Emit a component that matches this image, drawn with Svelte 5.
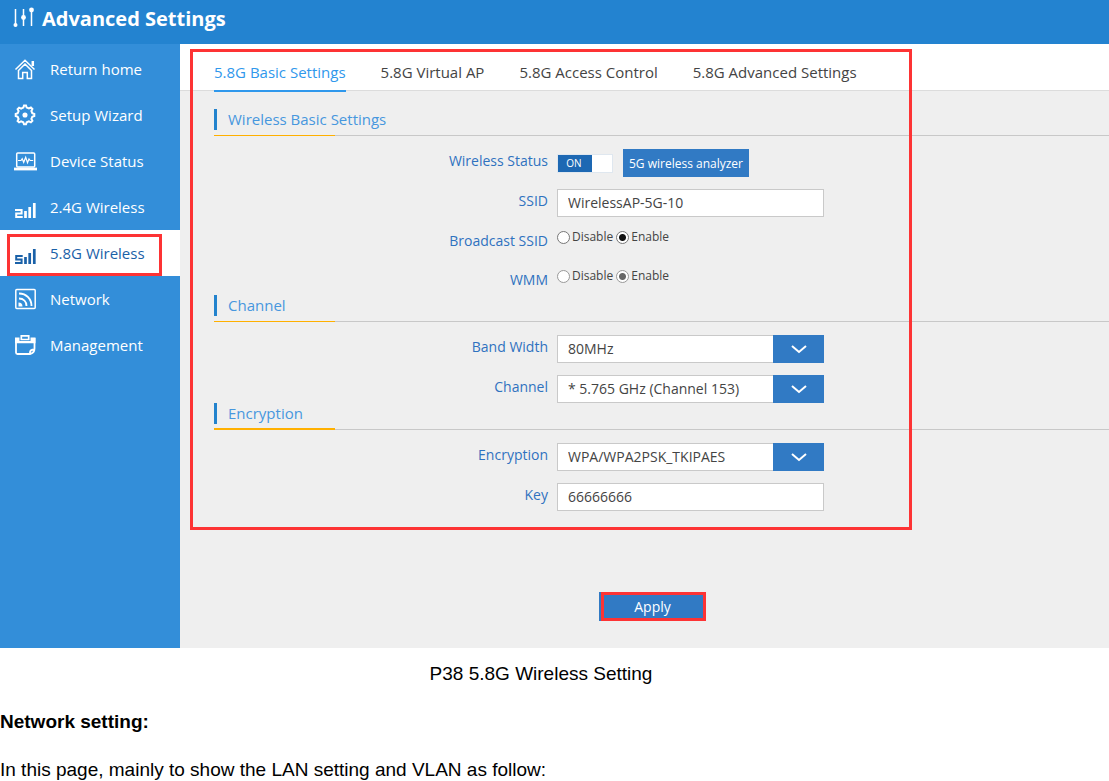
<script>
  const nav = [
    { id: 'home', label: 'Return home' },
    { id: 'wizard', label: 'Setup Wizard' },
    { id: 'status', label: 'Device Status' },
    { id: 'wifi2', label: '2.4G Wireless' },
    { id: 'wifi5', label: '5.8G Wireless' },
    { id: 'network', label: 'Network' },
    { id: 'manage', label: 'Management' }
  ];
  const tabs = ['5.8G Basic Settings', '5.8G Virtual AP', '5.8G Access Control', '5.8G Advanced Settings'];
  const current = 'wifi5';

  let activeTab = $state(0);
  let wireless = $state(true);
  let ssid = $state('WirelessAP-5G-10');
  let broadcast = $state('enable');
  let wmm = $state('enable');
  let key = $state('66666666');
</script>

{#snippet icon(id)}
  <svg class="icon" viewBox="0 0 24 24" width="24" height="24" fill="none" stroke="currentColor" stroke-width="1.5" aria-hidden="true">
    {#if id === 'home'}
      <path d="M2.5 12.5 12 3.2l9.5 9.3M5 14l7-7 7 7M5.5 13.5v8h4.2v-6h4.6v6h4.2v-8" />
      <path d="M19.8 4v5" stroke-width="2.5" />
    {:else if id === 'wizard'}
      <path stroke-width="2" d="M10.3 4.6 11 2.6h2l.7 2 2.2.9 2-1 1.5 1.5-1 2 .9 2.2 2 .8v2l-2 .7-.9 2.2 1 2-1.5 1.5-2-1-2.2.9-.7 2h-2l-.7-2-2.2-.9-2 1L4.6 18l1-2-.9-2.2-2-.8v-2l2-.7.9-2.2-1-2L6.1 4.6l2 1z" />
      <circle cx="12" cy="12" r="1.8" fill="currentColor" />
    {:else if id === 'status'}
      <rect x="3.7" y="4" width="18" height="14" rx="1" />
      <path stroke-width="1.2" d="M5 11.5h3l1.2-1.8 1.5 3.6 2-5 1.8 5.5 1.5-3.8 1.200 1.500h3" />
      <path stroke-width="2.8" d="M1 20h23" />
    {:else if id === 'wifi2' || id === 'wifi5'}
      {#if id === 'wifi2'}
        <path stroke-width="2" d="M2 15h6.600v3.500H3.200V22h6.500" />
      {:else}
        <path stroke-width="2" d="M9.700 15H3.200v3.500h5.400V22H2" />
      {/if}
      <path stroke-width="2.7" d="M12.500 23v-7M16.700 23V12M21.300 23V8" />
    {:else if id === 'network'}
      <rect x="2.8" y="2.5" width="19.400" height="19" rx="1" />
      <path stroke-width="1.9" d="M6 6.500c7.500 0 12.500 5.500 12.500 12.500M6 11.500c4.500 0 7.500 3 7.500 7.500" />
      <path fill="currentColor" stroke="none" d="M5.500 15.500c2.500 0 4 1.500 4 4h-4z" />
    {:else}
      <path stroke-width="1.8" d="M3 5v14.500q0 1.500 1.500 1.500H17q4.500-1 4.500-5.500V5M17 21v-1.500q0-3 4.500-3" />
      <path fill="currentColor" stroke="none" d="M2 4.500h4.500V8h11V4.500h5v5.800H2z" />
      <path stroke-width="1.7" d="M8.300 6.500V2.800h7.400v3.700zM10.500 2.800h3" />
    {/if}
  </svg>
{/snippet}

{#snippet chevron()}
  <span class="arrow" aria-hidden="true">
    <svg viewBox="0 0 18 10" width="18" height="10" fill="none" stroke="#fff" stroke-width="2"><path d="m2 2 7 6 7-6" /></svg>
  </span>
{/snippet}

<div class="app">
  <header>
    <svg viewBox="0 0 22 22" width="22" height="22" fill="none" stroke="#fff" stroke-width="1.5" aria-hidden="true">
      <path d="M3.500 3v17M11.500 3v17M19.500 3v17" />
      <circle cx="3.500" cy="19" r="2" fill="#fff" stroke="none" />
      <circle cx="11.500" cy="11.500" r="2.400" fill="#fff" stroke="none" />
      <circle cx="19.500" cy="4" r="2.400" fill="#fff" stroke="none" />
    </svg>
    <h1>Advanced Settings</h1>
  </header>
  <div class="body">
    <nav>
      {#each nav as item}
        <a href="#{item.id}" class:active={item.id === current}>
          {@render icon(item.id)}
          <span>{item.label}</span>
        </a>
      {/each}
    </nav>
    <main>
      <div class="panel">
        <div class="tabs">
          {#each tabs as tab, i}
            <button type="button" class:selected={i === activeTab} onclick={() => (activeTab = i)}>{tab}</button>
          {/each}
        </div>
        <div class="sections">
          <section>
            <h2>Wireless Basic Settings</h2>
            <div class="rows">
              <div class="row">
                <label for="wireless">Wireless Status</label>
                <div class="inline">
                  <span class="toggle">
                    <input id="wireless" type="checkbox" bind:checked={wireless} />
                    <span class="state">{wireless ? 'ON' : 'OFF'}</span>
                  </span>
                  <button type="button" class="analyzer">5G wireless analyzer</button>
                </div>
              </div>
              <div class="row">
                <label for="ssid">SSID</label>
                <input id="ssid" class="text" type="text" bind:value={ssid} />
              </div>
              <div class="row short" role="radiogroup" aria-labelledby="bc">
                <span class="name" id="bc">Broadcast SSID</span>
                <div class="radios">
                  <label><input type="radio" name="bc" value="disable" bind:group={broadcast} />Disable</label>
                  <label><input type="radio" name="bc" value="enable" bind:group={broadcast} />Enable</label>
                </div>
              </div>
              <div class="row short" role="radiogroup" aria-labelledby="wmm">
                <span class="name" id="wmm">WMM</span>
                <div class="radios">
                  <label><input type="radio" name="wmm" value="disable" bind:group={wmm} disabled />Disable</label>
                  <label><input type="radio" name="wmm" value="enable" bind:group={wmm} disabled />Enable</label>
                </div>
              </div>
            </div>
          </section>
          <section>
            <h2>Channel</h2>
            <div class="rows">
              <div class="row">
                <label for="band">Band Width</label>
                <div class="select"><select id="band"><option>80MHz</option></select>{@render chevron()}</div>
              </div>
              <div class="row">
                <label for="channel">Channel</label>
                <div class="select"><select id="channel"><option>* 5.765 GHz (Channel 153)</option></select>{@render chevron()}</div>
              </div>
            </div>
          </section>
          <section>
            <h2 class="thick">Encryption</h2>
            <div class="rows">
              <div class="row">
                <label for="enc">Encryption</label>
                <div class="select"><select id="enc"><option>WPA/WPA2PSK_TKIPAES</option></select>{@render chevron()}</div>
              </div>
              <div class="row">
                <label for="key">Key</label>
                <input id="key" class="text" type="text" bind:value={key} />
              </div>
            </div>
          </section>
        </div>
      </div>
      <div class="actions">
        <button type="button" class="apply">Apply</button>
      </div>
    </main>
  </div>
</div>
<div class="doc">
  <p class="caption">P38 5.8G Wireless Setting</p>
  <h3>Network setting:</h3>
  <p>In this page, mainly to show the LAN setting and VLAN as follow:</p>
</div>

<style>
  :global(body) { background: #fff; }
  *, *::before, *::after { box-sizing: border-box; }
  .app, button, input, select { font-family: 'Open Sans', 'Noto Sans', sans-serif; }
  header {
    display: flex;
    gap: 8px;
    height: 44px;
    padding: 6px 12px;
    background: #2383d0;
    color: #fff;
  }
  h1 { margin: 0; font-size: 20px; line-height: 26px; font-weight: 700; }
  .body { display: flex; }
  nav { flex: 0 0 180px; padding-top: 2px; background: #338ed9; }
  nav a {
    position: relative;
    display: flex;
    align-items: center;
    gap: 13px;
    height: 46px;
    padding-left: 13px;
    color: #fff;
    font-size: 15px;
    text-decoration: none;
  }
  nav a.active { background: #fff; color: #1a61a8; }
  nav a.active::after {
    content: '';
    position: absolute;
    inset: 4px 18px 0 7px;
    border: 3px solid #fd3334;
  }
  main { flex: 1; min-width: 0; background: #efefef; }
  .panel { position: relative; padding-bottom: 19px; }
  .panel::after {
    content: '';
    position: absolute;
    inset: 5px auto 0 10px;
    width: 722px;
    border: 3px solid #fd3334;
    pointer-events: none;
  }
  .tabs {
    display: flex;
    gap: 35px;
    height: 47px;
    padding-left: 34px;
    border-bottom: 1px solid #dcdcdc;
    background: #fff;
  }
  .tabs button {
    display: flex;
    height: 48px;
    padding: 18px 0 0;
    border: 0;
    border-bottom: 2px solid transparent;
    background: none;
    color: #444;
    font-size: 15px;
    line-height: 20px;
    white-space: nowrap;
  }
  .tabs .selected { border-color: #2f98ec; color: #2f98ec; }
  .sections { padding: 18px 0 0 34px; }
  h2 {
    display: flex;
    gap: 11px;
    margin: 0;
    padding-bottom: 6px;
    background:
      linear-gradient(#ffb000, #ffb000) left bottom / 121px 1px no-repeat,
      linear-gradient(#c8c8c8, #c8c8c8) left bottom / 100% 1px no-repeat;
    color: #4797de;
    font-size: 15px;
    line-height: 21px;
    font-weight: 400;
  }
  h2.thick { background-size: 121px 2px, 100% 1px; }
  h2::before {
    content: '';
    width: 3px;
    height: 21px;
    background: #2383cd;
  }
  .rows { display: grid; gap: 12px; padding-top: 13px; }
  .row {
    display: grid;
    grid-template-columns: 334px 267px;
    column-gap: 9px;
    height: 28px;
  }
  .row.short { height: 27px; }
  .row > label, .name {
    color: #2f72bf;
    font-size: 14px;
    line-height: 24px;
    text-align: right;
  }
  .inline { display: flex; align-items: center; gap: 10px; }
  .toggle { position: relative; display: flex; }
  .toggle input {
    appearance: none;
    width: 56px;
    height: 19px;
    margin: 0;
    border: 1px solid #dfe7ef;
    background: #fff;
  }
  .toggle input:checked { background: linear-gradient(90deg, #1d68b3 34px, #fff 34px); }
  .state {
    position: absolute;
    inset: 0 auto 0 0;
    width: 34px;
    color: #fff;
    font-size: 10px;
    line-height: 19px;
    text-align: center;
    pointer-events: none;
  }
  .analyzer, .apply { border: 0; background: #317ac4; color: #fff; white-space: nowrap; }
  .analyzer { height: 28px; padding: 0 6px; font-size: 12px; }
  .text, select {
    width: 100%;
    height: 28px;
    margin: 0;
    padding: 0 10px 2px;
    border: 1px solid #c9c9c9;
    border-radius: 0;
    background: #fff;
    color: #444;
    font-size: 14px;
  }
  .radios { display: flex; gap: 3px; height: 16px; }
  .radios label { display: flex; align-items: center; gap: 2px; color: #444; font-size: 12px; line-height: 16px; }
  .radios input {
    appearance: none;
    width: 13px;
    height: 13px;
    margin: 0;
    border: 1px solid #777;
    border-radius: 50%;
    background: #fff;
  }
  .radios input:checked { background: radial-gradient(circle, #111 3px, #fff 4px); }
  .radios input:disabled { border-color: #999; }
  .radios input:disabled:checked { background: radial-gradient(circle, #666 3px, #fff 4px); }
  .select { position: relative; }
  select { appearance: none; padding-right: 54px; }
  .arrow {
    position: absolute;
    inset: 0 0 0 auto;
    display: flex;
    align-items: center;
    justify-content: center;
    width: 51px;
    background: #317ac4;
    pointer-events: none;
  }
  .actions { display: flex; justify-content: center; padding: 62px 0 27px 16px; }
  .apply { position: relative; width: 107px; height: 29px; font-size: 14px; }
  .apply::after {
    content: '';
    position: absolute;
    inset: 0 0 0 2px;
    border: 3px solid #fd3334;
  }
  .doc { padding-top: 14px; color: #000; font-family: 'Liberation Sans', Arial, sans-serif; font-size: 19px; line-height: 24px; }
  .doc p, .doc h3 { margin: 0 0 24px; font-size: inherit; }
  .doc p:last-child { margin-bottom: 0; }
  .doc .caption { padding-right: 27px; text-align: center; }
</style>
